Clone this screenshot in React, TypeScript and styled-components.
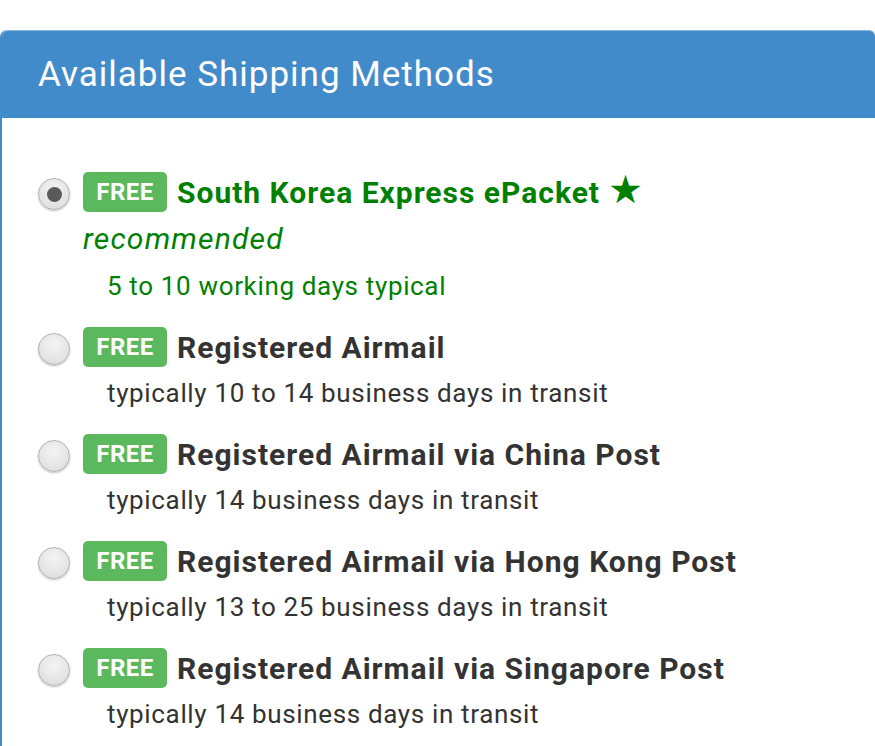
import React from 'react';
import styled, { createGlobalStyle } from 'styled-components';

const GlobalStyle = createGlobalStyle`
  html, body {
    margin: 0;
    padding: 0;
    background: #fff;
  }
  body {
    font-family: Roboto, "Noto Sans", "Liberation Sans", sans-serif;
    color: #333;
  }
`;

const Page = styled.div`
  padding-top: 30px;
  width: 875px;
  height: 716px;
  overflow: hidden;
`;

const Panel = styled.section`
  border-left: 2px solid #428bca;
  border-radius: 7px 7px 0 0;
  background: #fff;
  height: 100%;
`;

const Heading = styled.header`
  display: flex;
  align-items: center;
  height: 88px;
  padding-left: 36px;
  background: #428bca;
  border-radius: 6px 6px 0 0;
  color: #fff;
  font-size: 35px;
  letter-spacing: 1px;
  font-weight: 400;
  box-shadow: inset 0 1px 0 rgba(255, 255, 255, 0.35);
`;

const Methods = styled.div`
  padding: 54px 0 0 36px;
`;

const Method = styled.div`
  display: flex;
  align-items: flex-start;
  padding-bottom: 23px;
`;

const Radio = styled.span<{ $checked?: boolean }>`
  flex: none;
  position: relative;
  width: 32px;
  height: 32px;
  margin-top: 6px;
  margin-right: 13px;
  border-radius: 50%;
  box-sizing: border-box;
  border: 1.5px solid #b4b4b4;
  background: radial-gradient(circle at 50% 35%, #f4f4f4 0%, #e2e2e2 70%, #d6d6d6 100%);
  box-shadow: 0 1px 2px rgba(0, 0, 0, 0.25);

  &::after {
    content: '';
    display: ${(p) => (p.$checked ? 'block' : 'none')};
    position: absolute;
    left: 50%;
    top: 50%;
    width: 15px;
    height: 15px;
    margin: -7.5px 0 0 -7.5px;
    border-radius: 50%;
    background: #5a5a5a;
  }
`;

const Body = styled.div`
  display: flex;
  flex-direction: column;
`;

const TitleRow = styled.div`
  display: flex;
  align-items: center;
  height: 40px;
`;

const Badge = styled.span`
  display: inline-flex;
  align-items: center;
  justify-content: center;
  box-sizing: border-box;
  width: 84px;
  height: 40px;
  border-radius: 5px;
  background: #5cb85c;
  color: #fff;
  font-size: 24px;
  font-weight: 700;
  letter-spacing: 0.5px;
  margin-right: 10px;
`;

const Title = styled.span<{ $featured?: boolean }>`
  display: inline-flex;
  align-items: center;
  font-size: 30px;
  font-weight: 700;
  letter-spacing: 1px;
  color: ${(p) => (p.$featured ? '#008000' : '#333')};
  white-space: nowrap;
`;

const Star = styled.span`
  margin-left: 8px;
  font-weight: 400;
  font-family: "DejaVu Sans", sans-serif;
  font-size: 39px;
  line-height: 1;
  margin-top: -5px;
`;

const Note = styled.div`
  margin-top: 5px;
  font-size: 30px;
  letter-spacing: 1.2px;
  font-style: italic;
  line-height: 44px;
  color: #008000;
`;

const Transit = styled.div<{ $featured?: boolean }>`
  margin-top: ${(p) => (p.$featured ? '7px' : '8px')};
  padding-left: 24px;
  font-size: 26px;
  letter-spacing: 0.65px;
  line-height: 36px;
  color: ${(p) => (p.$featured ? '#008000' : '#333')};
`;

type ShippingMethod = {
  name: string;
  transit: string;
  featured?: boolean;
};

const methods: ShippingMethod[] = [
  { name: 'South Korea Express ePacket', transit: '5 to 10 working days typical', featured: true },
  { name: 'Registered Airmail', transit: 'typically 10 to 14 business days in transit' },
  { name: 'Registered Airmail via China Post', transit: 'typically 14 business days in transit' },
  { name: 'Registered Airmail via Hong Kong Post', transit: 'typically 13 to 25 business days in transit' },
  { name: 'Registered Airmail via Singapore Post', transit: 'typically 14 business days in transit' },
];

export default function App() {
  return (
    <>
      <GlobalStyle />
      <Page>
        <Panel>
          <Heading>Available Shipping Methods</Heading>
          <Methods>
            {methods.map((m) => (
              <Method key={m.name}>
                <Radio $checked={m.featured} />
                <Body>
                  <TitleRow>
                    <Badge>FREE</Badge>
                    <Title $featured={m.featured}>
                      {m.name}
                      {m.featured && <Star>★</Star>}
                    </Title>
                  </TitleRow>
                  {m.featured && <Note>recommended</Note>}
                  <Transit $featured={m.featured}>{m.transit}</Transit>
                </Body>
              </Method>
            ))}
          </Methods>
        </Panel>
      </Page>
    </>
  );
}
